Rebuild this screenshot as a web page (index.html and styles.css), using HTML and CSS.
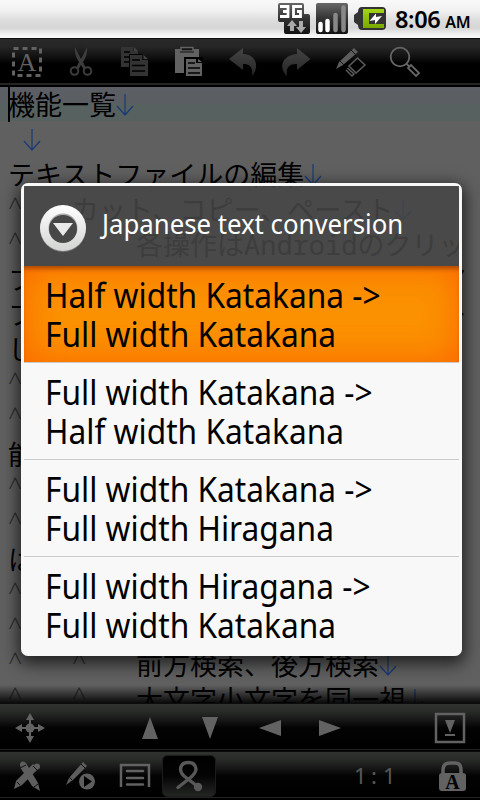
FILE: index.html
```html
<!DOCTYPE html>
<html lang="en">
<head>
<meta charset="utf-8">
<title>Text editor</title>
<link rel="stylesheet" href="styles.css">
</head>
<body>
<div class="screen">
  <header class="status">
    <svg class="status-icons" width="110" height="38" viewBox="0 0 110 38">
      <defs>
        <linearGradient id="dark" x2="0" y2="1"><stop offset="0" stop-color="#666"/><stop offset=".5" stop-color="#333"/><stop offset="1" stop-color="#111"/></linearGradient>
        <linearGradient id="green" x2="0" y2="1"><stop offset="0" stop-color="#a2d414"/><stop offset="1" stop-color="#79a900"/></linearGradient>
      </defs>
      <path d="M2 3H24Q26 3 26 5V14H30Q32 14 32 16V32Q32 34 30 34H8Q6 34 6 32V22H2Q0 22 0 20V5Q0 3 2 3Z" fill="url(#dark)"/>
      <path d="M2 6.500H10V16.500H2M5 11.500H10M24 6.500H15.500V16.500H22.500V11.500H19" fill="none" stroke="#fff" stroke-width="2.800"/>
      <path d="M14 20L19 26H16V31H12V26H9Z M23 33L18 27H21V21H25V27H28Z" fill="#aaa"/>
      <rect x="38" y="3" width="32" height="31" rx="2" fill="url(#dark)"/>
      <path d="M42.500 24V30M49.500 21V30" stroke="#fff" stroke-width="4.500" stroke-linecap="round"/>
      <path d="M57.500 15V30M65.500 7.500V30" stroke="#888" stroke-width="4.500" stroke-linecap="round"/>
      <path d="M84 7H104Q108 7 108 11V26Q108 30 104 30H84Q80 30 80 25L76 22V15L80 12Q80 7 84 7Z" fill="#333"/>
      <path d="M85 9H106V13H91V24H106V28H85V9Z" fill="url(#green)"/>
      <path d="M91.500 21L98 13.500V17L104 16L97 24V20Z" fill="#fff"/>
    </svg>
    <span class="clock">8:06</span><span class="ampm">AM</span>
  </header>

  <nav class="toolbar top">
    <svg width="480" height="48" viewBox="0 38 480 48">
      <defs><linearGradient id="arrow" x2="0" y2="1"><stop offset="0" stop-color="#444"/><stop offset="1" stop-color="#252525"/></linearGradient></defs>
      <rect x="13.500" y="48.500" width="27" height="27" fill="none" stroke="#626262" stroke-width="3" stroke-dasharray="5 4"/>
      <text class="serif" x="27" y="71" font-size="26" text-anchor="middle" fill="#626262">A</text>
      <g fill="none" stroke="#3c3c3c" stroke-width="2"><circle cx="74.500" cy="71" r="3.800"/><circle cx="87.500" cy="71" r="3.800"/></g>
      <path d="M75 47L81 59L87 47Q88 55 83 62L86 68L83.500 69L81 65L78.500 69L76 68L79 62Q74 55 75 47Z" fill="#3c3c3c"/>
      <path d="M121 47H133V51H138V67H121Z" fill="#333"/><path d="M134 47L138 51H134Z" fill="#444"/>
      <path d="M124 52H130M124 57H135M124 62H131" stroke="#000" stroke-width="1.300"/>
      <path d="M129 54H142V60H149V77H129Z" fill="#000"/><path d="M130 55H142V60H148V76H130Z" fill="#333"/><path d="M143.500 55L148 59H143.500Z" fill="#444"/>
      <path d="M132 60H140M132 65.500H145M132 71H145" stroke="#000" stroke-width="1.300"/>
      <path d="M175 49H199V73H175Z" fill="#626262"/><path d="M181 51V47.500H193V51Z" fill="#151515" stroke="#626262" stroke-width="1.500"/><path d="M180 52H194" stroke="#111"/>
      <path d="M184 57H203V77H184Z" fill="#000"/><path d="M186 59H196V63H202V76H186Z" fill="#626262"/><path d="M198 59L202 62H198Z" fill="#626262"/>
      <path d="M188 63H195M188 68H200M188 73H200" stroke="#000" stroke-width="1.300"/>
      <path d="M229 59L243 48V54C256 54 260 67 252 76C253 67 250 64 243 64V70Z" fill="url(#arrow)"/>
      <path d="M310.500 59L297 48V54C282 55 278 68 287 76C286 67 289 64 297 64V70Z" fill="url(#arrow)"/>
      <path d="M336 69L339 62L354 48L358 52L343 65Z" fill="#5c5c5c"/><path d="M351 50L356 55M340 61L344 65" stroke="#111"/>
      <path d="M357.500 58L365 65L356 73L349 66ZM347.500 68L354 74L352 76L346 70" fill="none" stroke="#5c5c5c" stroke-width="1.500"/>
      <circle cx="400" cy="57" r="9.300" fill="none" stroke="#666" stroke-width="1.800"/>
      <path d="M406.500 64L409 66M408 68L411 65L419 73L416 76Z" fill="none" stroke="#666" stroke-width="1.800"/>
    </svg>
  </nav>

  <main class="editor" lang="ja">
    <div class="line current">機能一覧<svg class="nl" viewBox="0 0 16 22"><path d="M8 0V21M0 12L8 21L16 12"/></svg></div>
    <div class="line second"><svg class="nl" viewBox="0 0 16 22"><path d="M8 0V21M0 12L8 21L16 12"/></svg></div>
    <div class="line">テキストファイルの編集<svg class="nl" viewBox="0 0 16 22"><path d="M8 0V21M0 12L8 21L16 12"/></svg></div>
    <div class="line"><i class="tab">^</i>カット、コピー、ペースト<svg class="nl" viewBox="0 0 16 22"><path d="M8 0V21M0 12L8 21L16 12"/></svg></div>
    <div class="line"><i class="tab">^</i><i class="tab">^</i>各操作はAndroidのクリッ</div>
    <div class="line ends"><span>フ</span><span>ア</span></div>
    <div class="line ends"><span>フ</span><span>ー</span></div>
    <div class="line">し</div>
    <div class="line"><i class="tab">^</i></div>
    <div class="line"><i class="tab">^</i></div>
    <div class="line">能</div>
    <div class="line"><i class="tab">^</i></div>
    <div class="line"><i class="tab">^</i></div>
    <div class="line">は</div>
    <div class="line"><i class="tab">^</i></div>
    <div class="line"><i class="tab">^</i></div>
    <div class="line"><i class="tab">^</i><i class="tab">^</i>前方検索、後方検索<svg class="nl" viewBox="0 0 16 22"><path d="M8 0V21M0 12L8 21L16 12"/></svg></div>
    <div class="line"><i class="tab">^</i><i class="tab">^</i>大文字小文字を同一視<svg class="nl" viewBox="0 0 16 22"><path d="M8 0V21M0 12L8 21L16 12"/></svg></div>
  </main>

  <nav class="toolbar">
    <svg width="480" height="48" viewBox="0 703 480 48">
      <g fill="#626262">
        <circle cx="30" cy="728" r="4.500"/><path d="M29 718H31V738H29ZM20 727H40V729H20Z"/>
        <path d="M30 713L34 720H26ZM30 743L34 736H26ZM15 728L22 724V732ZM45 728L38 724V732Z"/>
        <path d="M150 717L158 739H142ZM202 717H218L210 739ZM259 728L281 720V736ZM341 728L319 720V736Z"/>
        <path d="M445 720H455L450 733ZM445 734H455V736H445Z"/>
      </g>
      <rect x="436" y="714" width="28" height="28" fill="none" stroke="#626262" stroke-width="2.500"/>
    </svg>
  </nav>
  <nav class="toolbar bottom">
    <svg width="480" height="49" viewBox="0 751 480 49">
      <defs><linearGradient id="pressed" x2="0" y2="1"><stop offset="0" stop-color="#000"/><stop offset=".5" stop-color="#040404"/><stop offset="1" stop-color="#242624"/></linearGradient></defs>
      <g fill="#5e5e5e">
        <path d="M14 789L16 781L33 764L38 769L22 785Z"/><path d="M40 791L38 783L26 763L20 767L32 786Z"/>
        <circle cx="37" cy="766.500" r="3"/><circle cx="23" cy="764.500" r="3"/>
        <path d="M66 785L69 778L83 762L87 766L73 780Z"/><circle cx="87" cy="781.500" r="8"/>
      </g>
      <path d="M33 766L37 770M20 768L26 765M17 782L20 785M34 787L38 784M81 764L85 768M69 777L72 780" stroke="#111"/>
      <path d="M84 776V787L92 781.500Z" fill="#000"/>
      <path d="M121 787V765H149V787" fill="none" stroke="#626262" stroke-width="2.500"/>
      <path d="M127 771H143M127 778H143M127 784.500H143" stroke="#626262" stroke-width="2.500" stroke-linecap="round"/>
      <rect x="162.500" y="755.500" width="53" height="41" rx="5" fill="url(#pressed)" stroke="#1b1c1b"/>
      <path d="M178 787.500L190 778Q196 773 196 769Q195 762.500 188.500 762.500Q181 762.500 180.500 769Q180.500 773 184 776L197 786" fill="none" stroke="#585858" stroke-width="3.300" stroke-linecap="round"/><circle cx="198" cy="787" r="4.200" fill="#585858"/>
      <text class="ratio" x="354 371 383" y="784" font-size="22" fill="#585858">1:1</text>
      <path d="M443 775V770Q443 763 450 763H455Q461 763 461 770V775" fill="none" stroke="#626262" stroke-width="3.500"/>
      <rect x="439" y="773" width="27" height="18" rx="3" fill="#626262"/>
      <text class="serif" x="452.500" y="789" font-size="20" font-weight="bold" text-anchor="middle" fill="#000">A</text>
    </svg>
  </nav>

  <section class="dialog">
    <h1 class="title">
      <svg width="48" height="48" viewBox="0 0 48 48">
        <defs><linearGradient id="ring" x2="0" y2="1"><stop offset="0" stop-color="#fff"/><stop offset="1" stop-color="#d3d5d3"/></linearGradient></defs>
        <circle cx="24" cy="25" r="23" fill="#777"/><circle cx="24" cy="24" r="23" fill="url(#ring)"/><circle cx="24" cy="24" r="14.500" fill="#aaa"/><circle cx="24" cy="25" r="14" fill="#484848"/>
        <path d="M14 19H34L24 32Z" fill="#ebebeb"/>
      </svg>
      <span>Japanese text conversion</span>
    </h1>
    <ul class="options">
      <li class="selected"><span>Half width Katakana -&gt;<br>Full width Katakana</span></li>
      <li><span>Full width Katakana -&gt;<br>Half width Katakana</span></li>
      <li><span>Full width Katakana -&gt;<br>Full width Hiragana</span></li>
      <li><span>Full width Hiragana -&gt;<br>Full width Katakana</span></li>
    </ul>
  </section>
</div>
</body>
</html>
```
FILE: styles.css
```css
* { box-sizing: border-box; }
body { margin: 0; }
svg { display: block; flex: none; }
.screen {
  position: relative;
  width: 480px;
  height: 800px;
  overflow: hidden;
  display: flex;
  flex-direction: column;
  background: #000;
}
.status {
  flex: none;
  height: 38px;
  display: flex;
  align-items: baseline;
  padding-left: 278px;
  background: linear-gradient(#f9f9f9 0, #f2f2f2 10px, #dcdddc 20px, #d4d5d4 28px, #ececec 33px, #fafafa 38px);
  font-family: "Noto Sans", "Open Sans", sans-serif;
  color: #000;
}
.status-icons { align-self: flex-start; }
.clock { margin-left: 7px; font-size: 23.500px; font-weight: 600; line-height: 39px; letter-spacing: -.4px; }
.ampm { margin-left: 5px; font-size: 16px; font-weight: 600; letter-spacing: -.3px; }
.toolbar {
  flex: none;
  height: 48px;
  border-top: 1px solid #0c0c0c;
  background: linear-gradient(#303230 0, #2a2c2a 7px, #181918 15px, #030303 24px, #000 45px, #222 45px, #222 46px, #000 46px);
}
.toolbar svg { margin-top: -1px; }
.toolbar.top { background: linear-gradient(#292929 0, #252525 8px, #131313 17px, #000 25px, #000 44px, #242424 44px, #242424 46px, #000 46px); }
.toolbar.bottom { height: 49px; }
.serif { font-family: "Liberation Serif", serif; }
.ratio { font-family: "Noto Sans", sans-serif; }
.editor {
  position: relative;
  height: 617px;
  overflow: hidden;
  background: #606060;
  color: #000;
  font: 27px/37px "Noto Sans Mono", "Noto Sans CJK JP", "DejaVu Sans Mono", monospace;
}
.editor::after {
  content: "";
  position: absolute;
  inset: auto 0 0;
  height: 18px;
  background: linear-gradient(transparent, rgba(0, 0, 0, .9));
}
.line { display: flex; align-items: center; height: 35px; padding: 2px 0 0 8px; white-space: nowrap; }
.current { background: linear-gradient(#5c5f65 0, #5a5e62 17px, #576260 18px, #576260 35px); box-shadow: inset 0 1px #000; }
.current::before { content: ""; width: 2px; height: 35px; margin-right: -2px; background: #000; }
.second { padding-left: 23px; }
.ends { justify-content: space-between; padding-right: 14px; }
.tab { width: 64px; margin-top: -6px; color: #303030; font: 300 25px/35px "Noto Sans", sans-serif; }
.nl { width: 16px; height: 22px; margin-left: 1px; margin-top: 1px; overflow: visible; fill: none; stroke: #183a78; stroke-width: 1.200; }
.dialog {
  position: absolute;
  left: 21px;
  top: 183px;
  width: 441px;
  height: 473px;
  border: 3px solid #f8f8f8;
  border-radius: 7px;
  box-shadow: 0 5px 16px 3px rgba(0, 0, 0, .65);
  font-family: "Noto Sans", "Open Sans", sans-serif;
}
.title {
  display: flex;
  align-items: center;
  height: 80px;
  margin: 0;
  padding: 3px 0 0 15px;
  background: rgba(69, 69, 69, .88);
  color: #fff;
  font-size: 27.500px;
  font-weight: 400;
}
.title span { margin: -8px 0 0 15px; white-space: nowrap; transform: scaleX(.936); transform-origin: 0 0; }
.options { margin: 0; padding: 0; list-style: none; background: #f8f8f8; }
.options li {
  height: 97px;
  padding: 10px 0 0 21px;
  border-bottom: 1px solid #c9cac9;
  color: #000;
  font-size: 34px;
  line-height: 39px;
  white-space: nowrap;
}
.options li span { display: inline-block; transform: scaleX(.932); transform-origin: 0 0; }
.options li:last-child { border-bottom: 0; height: 96px; }
.options .selected {
  background: #fb9100;
  box-shadow: inset 0 5px 4px -2px rgba(150, 60, 0, .75), inset 0 0 36px #fb6500;
}
```
